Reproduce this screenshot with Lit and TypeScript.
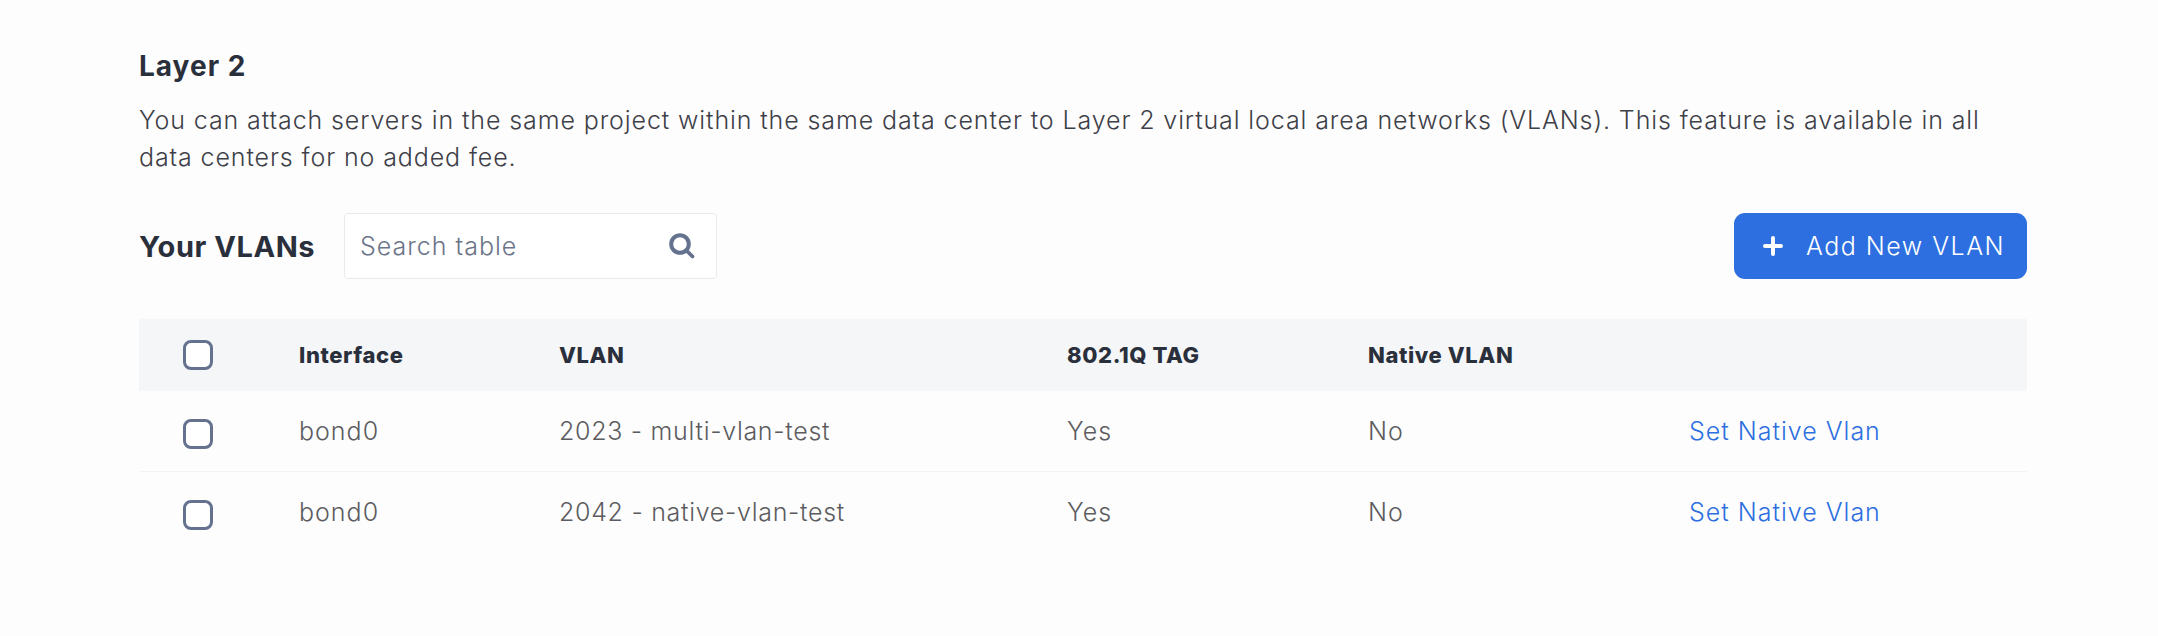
import { LitElement, html, css } from "lit";
import { customElement } from "lit/decorators.js";

const rows = [
  { vlan: "2023 - multi-vlan-test" },
  { vlan: "2042 - native-vlan-test" },
];

@customElement("app-root")
export class AppRoot extends LitElement {
  static styles = css`
    :host {
      display: block;
      min-height: 636px;
      background: #fdfdfd;
      font-family: "Inter", "Noto Sans", sans-serif;
      color: #5c5c60;
      padding: 48px 131px 0 139px;
      box-sizing: border-box;
    }
    h2 {
      margin: 0;
      font-size: 28px;
      line-height: 36px;
      font-weight: 700;
      letter-spacing: 1px;
      color: #2a2f3c;
    }
    p {
      margin: 18px 0 0;
      font-size: 25px;
      line-height: 37px;
      font-weight: 300;
      letter-spacing: 0.89px;
      color: #3d4048;
      width: 1860px;
    }
    .bar {
      display: flex;
      align-items: center;
      margin-top: 37px;
      height: 66px;
    }
    .title {
      font-size: 29px;
      font-weight: 700;
      letter-spacing: 0.55px;
      color: #2a2f3c;
      width: 205px;
    }
    .search {
      width: 373px;
      height: 66px;
      box-sizing: border-box;
      border: 1px solid #e9eaec;
      border-radius: 4px;
      background: #fff;
      display: flex;
      align-items: center;
      justify-content: space-between;
      padding: 0 21px 0 15px;
      font-size: 25px;
      font-weight: 300;
      letter-spacing: 1px;
      color: #6b7488;
    }
    .search svg { width: 26px; height: 26px; display: block; }
    .add {
      margin-left: auto;
      width: 293px;
      height: 66px;
      box-sizing: border-box;
      background: #2d6fe0;
      border-radius: 11px;
      color: #fff;
      font-size: 25px;
      font-weight: 300;
      letter-spacing: 1.5px;
      display: flex;
      align-items: center;
      padding-left: 29px;
      gap: 23px;
    }
    .add svg { width: 20px; height: 20px; display: block; }
    .table { margin-top: 40px; }
    .row {
      display: grid;
      grid-template-columns: 160px 260px 508px 301px 321px 1fr;
      align-items: center;
      height: 81px;
      font-size: 25px;
      font-weight: 300;
      letter-spacing: 1px;
      border-bottom: 1px solid #f3f3f4;
      box-sizing: border-box;
    }
    .row:last-child { border-bottom: 0; height: 80px; }
    .row.head {
      height: 72px;
      background: #f5f6f8;
      border-bottom: 0;
      font-size: 22px;
      font-weight: 800;
      letter-spacing: 0.6px;
      color: #2a2f3c;
    }
    .check {
      width: 30px;
      height: 30px;
      box-sizing: border-box;
      margin: 5px 0 0 44px;
      border: 3.5px solid #64728f;
      border-radius: 8px;
      background: #fff;
    }
    .head .check { margin-top: 0; }
    .vlan { letter-spacing: 0.7px; }
    .link { color: #2d6fe0; }
  `;

  private check() {
    return html`<div class="check"></div>`;
  }

  render() {
    return html`
      <h2>Layer 2</h2>
      <p>You can attach servers in the same project within the same data center to Layer 2 virtual local area networks (VLANs). This feature is available in all data centers for no added fee.</p>
      <div class="bar">
        <div class="title">Your VLANs</div>
        <div class="search">
          <span>Search table</span>
          <svg viewBox="0 0 26 26" fill="none" stroke="#64728f"><circle cx="11" cy="11" r="8.800" stroke-width="4"/><path d="M18 18l5.500 5.500" stroke-width="3.800" stroke-linecap="round"/></svg>
        </div>
        <div class="add">
          <svg viewBox="0 0 20 20"><path d="M10 2v16M2 10h16" stroke="#fff" stroke-width="4" stroke-linecap="round"/></svg>
          <span>Add New VLAN</span>
        </div>
      </div>
      <div class="table">
        <div class="row head">
          ${this.check()}
          <div>Interface</div><div>VLAN</div><div>802.1Q TAG</div><div>Native VLAN</div><div></div>
        </div>
        ${rows.map(
          (r) => html`<div class="row">
            ${this.check()}
            <div>bond0</div><div class="vlan">${r.vlan}</div><div>Yes</div><div>No</div><div class="link">Set Native Vlan</div>
          </div>`
        )}
      </div>
    `;
  }
}
